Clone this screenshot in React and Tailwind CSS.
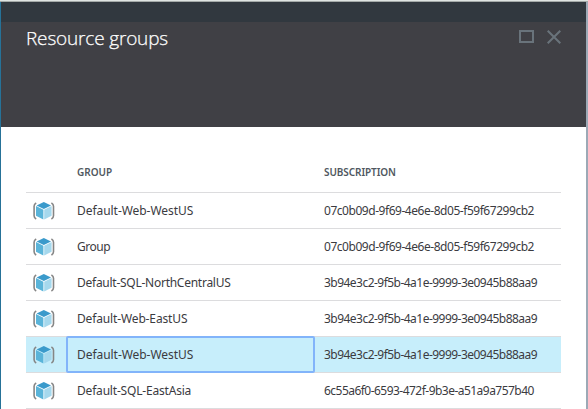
const subscriptions = {
  first: { id: "07c0b09d-9f69-4e6e-8d05-f59f67299cb2", tracking: "tracking-[-0.46px]" },
  second: { id: "3b94e3c2-9f5b-4a1e-9999-3e0945b88aa9", tracking: "tracking-[-0.53px]" },
  third: { id: "6c55a6f0-6593-472f-9b3e-a51a9a757b40", tracking: "tracking-[-0.53px]" },
};

const groups = [
  { name: "Default-Web-WestUS", tracking: "tracking-[-0.05px]", subscription: subscriptions.first },
  { name: "Group", tracking: "tracking-[-0.45px]", subscription: subscriptions.first },
  { name: "Default-SQL-NorthCentralUS", tracking: "tracking-[-0.26px]", subscription: subscriptions.second },
  { name: "Default-Web-EastUS", tracking: "tracking-[-0.14px]", subscription: subscriptions.second },
  { name: "Default-Web-WestUS", tracking: "tracking-[-0.05px]", subscription: subscriptions.second, selected: true },
  { name: "Default-SQL-EastAsia", tracking: "tracking-[-0.19px]", subscription: subscriptions.third },
];

function GroupIcon() {
  return (
    <svg width="22" height="18" viewBox="0 0 22 18" className="block" aria-hidden="true">
      <path
        d="M3.200 1C1.700 1.800 1.100 2.700 1.100 4.200v9.600c0 1.500.6 2.400 2.100 3.200M18.400 1c1.500.8 2.100 1.700 2.100 3.200v9.600c0 1.500-.6 2.400-2.100 3.200"
        fill="none"
        stroke="#858585"
        strokeWidth="1.600"
      />
      <path d="M10.800 0 18 3.400 10.800 7.100 3.600 3.400Z" fill="#3a9acb" />
      <path d="M3 4.100 10.400 7.700V17.500L3 13.800Z" fill="#5ab4d9" />
      <path d="M18.600 4.100 11.200 7.700V17.500l7.400-3.700Z" fill="#a5d8ed" />
    </svg>
  );
}

function Row({ name, tracking, subscription, selected }) {
  return (
    <div className={`flex h-9 border-b border-[#dcdcde] ${selected ? "bg-[#c7eefb]" : "bg-white"}`}>
      <div className="flex w-10 shrink-0 items-center pl-[7px]">
        <GroupIcon />
      </div>
      <div
        className={`-mt-px flex h-[37px] w-[249px] shrink-0 items-center rounded-[2px] border-2 pl-[9px] ${
          selected ? "border-[#82b4fa]" : "border-transparent"
        }`}
      >
        <span className={`whitespace-nowrap ${tracking}`}>{name}</span>
      </div>
      <div className="flex items-center pl-[9px]">
        <span className={`whitespace-nowrap ${subscription.tracking}`}>{subscription.id}</span>
      </div>
    </div>
  );
}

export default function App() {
  return (
    <div className="flex h-[409px] w-[588px] flex-col overflow-hidden bg-white font-['Noto_Sans','Open_Sans',sans-serif]">
      <div className="h-px shrink-0 bg-[#dfe4e2]" />
      <div className="h-px shrink-0 bg-[#a4aaa8]" />
      <div className="flex min-h-0 grow border-l border-l-[#267298]">
        <div className="flex min-w-0 grow flex-col">
          <div className="h-5 shrink-0 bg-[#31383f]" />
          <header className="flex h-[105px] shrink-0 items-start justify-between bg-[#404045] pl-[25px] pr-[25px]">
            <h1 className="mt-[4px] font-['Open_Sans',sans-serif] text-[19px] font-light leading-6 tracking-[-0.17px] text-white [-webkit-text-stroke:0.25px_white]">
              Resource groups
            </h1>
            <div className="mt-2 flex gap-[13px] text-[#69737b]">
              <svg width="15" height="13" viewBox="0 0 15 13" fill="none" stroke="currentColor" strokeWidth="2">
                <path d="M1 1h13v11H1z" />
              </svg>
              <svg width="14" height="14" viewBox="0 0 14 14" fill="none" stroke="currentColor" strokeWidth="2">
                <path d="m.7.7 12.600 12.600M13.300.7.7 13.300" />
              </svg>
            </div>
          </header>
          <main className="flex flex-col pl-[25px] pr-[25px] pt-[25px] text-[12px] text-[#3b3b3f]">
            <div className="flex h-[41px] items-center border-b border-[#dcdcde] text-[10px] font-semibold text-[#505860]">
              <div className="w-[298px] pl-[51px]">GROUP</div>
              <div className="tracking-[-0.08px]">SUBSCRIPTION</div>
            </div>
            {groups.map((group, index) => (
              <Row key={index} {...group} />
            ))}
          </main>
        </div>
        <div className="w-[2px] shrink-0 bg-[#9ca9b6]" />
      </div>
    </div>
  );
}
